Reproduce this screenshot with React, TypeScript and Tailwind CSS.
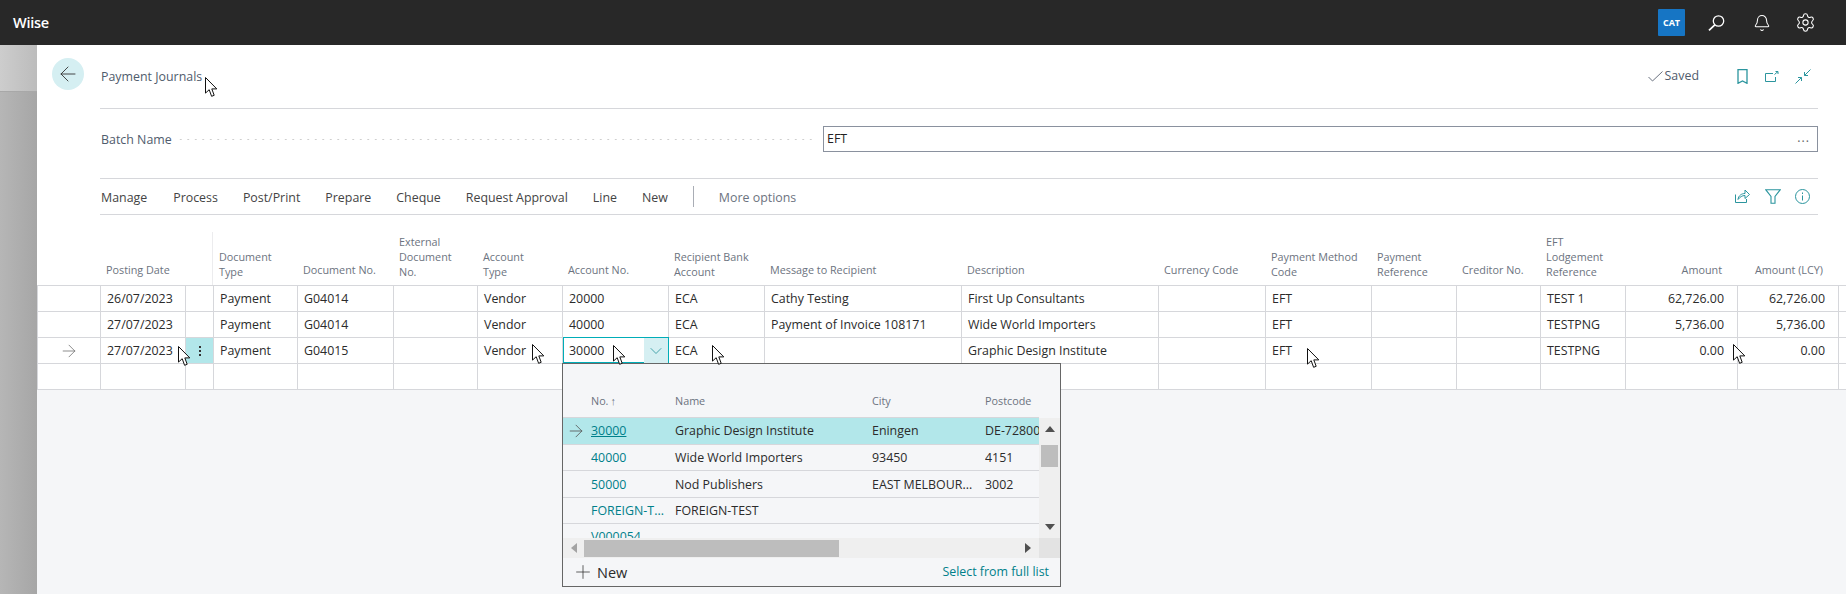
import { ArrowLeft, ArrowRight, ChevronDown, Plus, Settings, Bell } from 'lucide-react'

const gridCols =
  'grid grid-cols-[63px_85px_28px_84px_96px_84px_85px_106px_96px_197px_197px_107px_106px_85px_84px_85px_112px_101px_8px]'
const listCols = 'grid grid-cols-[28px_84px_197px_113px_54px]'
const teal = '#2b959e'

const headers: { lines: string[]; right?: boolean }[] = [
  { lines: [] },
  { lines: ['Posting Date'] },
  { lines: [] },
  { lines: ['Document', 'Type'] },
  { lines: ['Document No.'] },
  { lines: ['External', 'Document', 'No.'] },
  { lines: ['Account', 'Type'] },
  { lines: ['Account No.'] },
  { lines: ['Recipient Bank', 'Account'] },
  { lines: ['Message to Recipient'] },
  { lines: ['Description'] },
  { lines: ['Currency Code'] },
  { lines: ['Payment Method', 'Code'] },
  { lines: ['Payment', 'Reference'] },
  { lines: ['Creditor No.'] },
  { lines: ['EFT', 'Lodgement', 'Reference'] },
  { lines: ['Amount'], right: true },
  { lines: ['Amount (LCY)'], right: true },
  { lines: [] }
]

const rows = [
  ['', '26/07/2023', '', 'Payment', 'G04014', '', 'Vendor', '20000', 'ECA', 'Cathy Testing', 'First Up Consultants', '', 'EFT', '', '', 'TEST 1', '62,726.00', '62,726.00', ''],
  ['', '27/07/2023', '', 'Payment', 'G04014', '', 'Vendor', '40000', 'ECA', 'Payment of Invoice 108171', 'Wide World Importers', '', 'EFT', '', '', 'TESTPNG', '5,736.00', '5,736.00', ''],
  ['', '27/07/2023', '', 'Payment', 'G04015', '', 'Vendor', '30000', 'ECA', '', 'Graphic Design Institute', '', 'EFT', '', '', 'TESTPNG', '0.00', '0.00', ''],
  ['', '', '', '', '', '', '', '', '', '', '', '', '', '', '', '', '', '', '']
]

const vendors = [
  { no: '30000', name: 'Graphic Design Institute', city: 'Eningen', post: 'DE-72800', h: 'h-[27px]', pad: '' },
  { no: '40000', name: 'Wide World Importers', city: '93450', post: '4151', h: 'h-[26px]', pad: 'pt-[2px]' },
  { no: '50000', name: 'Nod Publishers', city: 'EAST MELBOUR...', post: '3002', h: 'h-[27px]', pad: 'pt-[2px]' },
  { no: 'FOREIGN-T...', name: 'FOREIGN-TEST', city: '', post: '', h: 'h-[26px]', pad: 'pt-[2px]' },
  { no: 'V000054', name: '', city: '', post: '', h: 'h-[26px]', pad: 'pt-[2px]' }
]

const cursors = [
  'left-[205px] top-[77px]',
  'left-[178px] top-[346px]',
  'left-[532px] top-[344px]',
  'left-[613px] top-[345px]',
  'left-[712px] top-[345px]',
  'left-[1307px] top-[348px]',
  'left-[1733px] top-[344px]'
]

function MouseCursor({ className }: { className: string }) {
  return (
    <svg className={`absolute ${className}`} width="13" height="20" viewBox="0 0 13 20">
      <path d="M.5.5v15.6l3.7-3.4 2.4 6.6 2.6-1-2.4-6.4h5z" fill="#fff" stroke="#111" strokeWidth="1" />
    </svg>
  )
}

export default function App() {
  return (
    <div
      className="relative flex flex-col w-[1846px] h-[594px] overflow-hidden bg-white text-[12.4px] text-[#2b2b2b]"
      style={{ fontFamily: '"Open Sans", "Noto Sans", sans-serif' }}
    >
      {/* top bar */}
      <div className="flex items-center h-[45px] pl-[13px] pr-[30px] bg-[#282828] text-white">
        <span className="text-[14.5px] font-semibold tracking-[-0.3px]">Wiise</span>
        <div className="ml-auto flex items-center">
          <div className="flex items-center justify-center size-[27px] rounded-[1px] bg-[#1675c4] text-[9px] font-bold">CAT</div>
          <svg className="ml-[23px]" width="17" height="16" viewBox="0 0 17 16" fill="none" stroke="#fff" strokeWidth="1.3">
            <circle cx="10.5" cy="6" r="5.2" />
            <path d="M6.8 9.8 1 15.4" strokeWidth="1.7" />
          </svg>
          <Bell className="ml-[28px] size-[18px]" strokeWidth={1.4} />
          <Settings className="ml-[24px] size-[21px]" strokeWidth={1.2} />
        </div>
      </div>

      <div className="flex flex-1 min-h-0">
        {/* blurred page behind */}
        <div className="flex flex-col w-[37px] bg-gradient-to-r from-[#b6b6b6] to-[#a6a6a6]">
          <div className="h-[47px] border-b border-[#a8a8a8] bg-gradient-to-r from-[#cdcdcd] to-[#bcbcbc]" />
        </div>

        <div className="flex flex-col flex-1 min-w-0">
          <div className="flex">
            <div className="w-[63px] pl-[15px] pt-[13px]">
              <button className="flex items-center justify-center w-[32px] h-[32px] rounded-full bg-[#d5eff2] text-[#333]">
                <ArrowLeft className="size-[24px]" strokeWidth={0.9} />
              </button>
            </div>
            <div className="flex flex-col w-[1718px] text-[#505c6d]">
              <div className="flex items-center h-[64px] pb-[1px] pr-[7px] border-b border-[#d6d7db]">
                <span className="pl-[1px] pt-[3px]">Payment Journals</span>
                <svg className="ml-auto" width="15" height="11" viewBox="0 0 15 11" fill="none" stroke="#6b7280">
                  <path d="M.5 6 4.500 10 14.500.5" />
                </svg>
                <span className="ml-[2px] mr-[38px] pt-[1px]">Saved</span>
                <svg width="11" height="15" viewBox="0 0 11 15" fill="none" stroke={teal} strokeWidth="1.3">
                  <path d="M1 .7h9v13.6l-4.500-2.400L1 14.300z" />
                </svg>
                <svg className="ml-[17px]" width="14" height="11" viewBox="0 0 14 11" fill="none" stroke={teal}>
                  <path d="M8 2.500H.5v8h10V6M9.500 3.500 13 .5M10.500.5H13V3" />
                </svg>
                <svg className="ml-[16px]" width="16" height="15" viewBox="0 0 16 15" fill="none" stroke={teal}>
                  <path d="M.5 14.500 6.500 8.500M3 8.500h3.500V12M15.500.5l-6 6M13 6.500H9.500V3" />
                </svg>
              </div>
              <div className="flex items-start h-[70px] pt-[17px] border-b border-[#d6d7db]">
                <div className="flex items-center w-[723px] h-[26px]">
                  <span className="pl-[1px] pt-[2px]">Batch Name</span>
                  <span className="ml-[5px] mr-[8px] flex-1 h-[3px] mt-[1px] bg-[radial-gradient(circle,#cfcfcf_1px,transparent_1px)] bg-[length:7.5px_3px]" />
                </div>
                <div className="flex items-center flex-1 h-[26px] pl-[3px] pr-[4px] border border-[#8a919e] text-[#222]">
                  <span className="pt-[1px]">EFT</span>
                  <span className="ml-auto pr-[3px] pb-[2px] tracking-[1px] text-[#666]">...</span>
                </div>
              </div>
              <div className="flex items-center h-[36px] pr-[8px] border-b border-[#d6d7db] text-[#444]">
                <div className="flex items-center gap-[25px] pl-[1px] pt-[3px]">
                  <span>Manage</span>
                  <span className="ml-[1px]">Process</span>
                  <span>Post/Print</span>
                  <span>Prepare</span>
                  <span>Cheque</span>
                  <span>Request Approval</span>
                  <span>Line</span>
                  <span>New</span>
                </div>
                <span className="ml-[25px] w-px h-[21px] bg-[#a9adb5]" />
                <span className="ml-[25px] pt-[3px] text-[#6c7380]">More options</span>
                <svg className="ml-auto -mt-[1px]" width="15" height="14" viewBox="0 0 15 14" fill="none" stroke={teal}>
                  <path d="M.5 5.500v8h11V10M3 10.500C3.500 6.500 6.500 4.500 10 4.500V1l4.500 4.500L10 9.500v-3c-3 0-5 1.500-7 4z" />
                </svg>
                <svg className="ml-[15px] -mt-[1px]" width="16" height="15" viewBox="0 0 16 15" fill="none" stroke={teal} strokeWidth="1.1">
                  <path d="M.7.7h14.600L10 7.500v6.800H6V7.500z" />
                </svg>
                <svg className="ml-[14px] -mt-[1px]" width="15" height="15" viewBox="0 0 15 15" fill="none" stroke={teal}>
                  <circle cx="7.500" cy="7.500" r="7" />
                  <path d="M7.500 6.500v5M7.500 3.500v1.500" />
                </svg>
              </div>
            </div>
          </div>

          {/* journal lines */}
          <div className="mt-[17px]">
            <div className={`${gridCols} h-[53px] text-[10.8px] leading-[15px] text-[#6c7380]`}>
              {headers.map((h, i) => (
                <div
                  key={i}
                  className={`flex flex-col justify-end px-[6px] ${h.lines.length > 1 ? 'pb-[6px]' : 'pb-[8px]'} ${h.right ? 'items-end pr-[15px]' : ''} ${i === 2 ? 'border-r border-[#ececee]' : ''}`}
                >
                  {h.lines.map((l) => (
                    <span key={l} className="whitespace-nowrap">{l}</span>
                  ))}
                </div>
              ))}
            </div>
            {rows.map((row, r) => (
              <div
                key={r}
                className={`${gridCols} border-t border-l border-[#d6d7db] ${r === 3 ? 'h-[27px] border-b' : 'h-[26px]'}`}
              >
                {row.map((cell, c) => {
                  if (r === 2 && c === 0) {
                    return (
                      <div key={c} className="flex items-center justify-end pr-[21px] border-r border-[#d6d7db] text-[#666]">
                        <ArrowRight className="size-[20px]" strokeWidth={0.9} />
                      </div>
                    )
                  }
                  if (r === 2 && c === 2) {
                    return (
                      <div key={c} className="flex flex-col items-center justify-center gap-[2px] bg-[#b2e7ea] border-r border-[#d6d7db]">
                        <span className="size-[2px] bg-[#333]" />
                        <span className="size-[2px] bg-[#333]" />
                        <span className="size-[2px] bg-[#333]" />
                      </div>
                    )
                  }
                  if (r === 2 && c === 7) {
                    return (
                      <div key={c} className="flex border-x border-t border-[#00adb8] -mt-px">
                        <div className="flex flex-1 items-center pl-[5px] pt-[2px] border-b-[1.5px] border-[#00adb8]">{cell}</div>
                        <div className="flex items-center justify-center w-[24px] bg-[#d5eff2] text-[#2b959e]">
                          <ChevronDown className="size-[20px]" strokeWidth={1} />
                        </div>
                      </div>
                    )
                  }
                  return (
                    <div
                      key={c}
                      className={`flex items-center px-[6px] pt-[2px] whitespace-nowrap ${c === 18 ? '' : 'border-r border-[#d6d7db]'} ${c === 16 || c === 17 ? 'justify-end pr-[13px]' : ''}`}
                    >
                      {cell}
                    </div>
                  )
                })}
              </div>
            ))}
          </div>
          <div className="flex-1 bg-[#f5f6f8]" />
        </div>
      </div>

      {/* account lookup */}
      <div className="absolute left-[562px] top-[363px] flex flex-col w-[499px] h-[224px] border border-[#666] bg-[#f5f6f8]">
        <div className="flex h-[174px]">
          <div className="w-[476px] overflow-hidden">
            <div className={`${listCols} h-[54px] items-end pb-[8px] text-[10.8px] text-[#6c7380] border-b border-[#d6d7db]`}>
              <span />
              <span className="flex items-center gap-[2px]">No. <span className="text-[11px] font-bold leading-none">↑</span></span>
              <span>Name</span>
              <span>City</span>
              <span>Postcode</span>
            </div>
            {vendors.map((v, i) => (
              <div
                key={v.no}
                className={`${listCols} ${v.h} ${v.pad} items-center border-b border-[#d6d7db] whitespace-nowrap ${i === 0 ? 'bg-[#b2e7ea]' : ''}`}
              >
                <span className="flex justify-end pr-[5px] text-[#555]">
                  {i === 0 && <ArrowRight className="size-[20px]" strokeWidth={1} />}
                </span>
                <span className={`text-[#00808a] ${i === 0 ? 'underline' : ''}`}>{v.no}</span>
                <span>{v.name}</span>
                <span>{v.city}</span>
                <span className="overflow-hidden">{v.post}</span>
              </div>
            ))}
          </div>
          <div className="flex flex-col items-center flex-1 mt-[54px] pt-[8px] bg-[#efefef]">
            <svg width="10" height="6" viewBox="0 0 10 6"><path d="M5 0l5 6H0z" fill="#505050" /></svg>
            <div className="w-[17px] h-[22px] mt-[13px] bg-[#bdbdbd]" />
            <svg className="mt-auto mb-[8px]" width="10" height="6" viewBox="0 0 10 6"><path d="M5 6 0 0h10z" fill="#505050" /></svg>
          </div>
        </div>
        <div className="flex h-[20px]">
          <div className="flex items-center w-[476px] pl-[8px] bg-[#efefef]">
            <svg width="6" height="10" viewBox="0 0 6 10"><path d="M0 5l6-5v10z" fill="#a3a3a3" /></svg>
            <div className="ml-[7px] w-[255px] h-[17px] bg-[#bdbdbd]" />
            <svg className="ml-auto mr-[8px]" width="6" height="10" viewBox="0 0 6 10"><path d="M6 5 0 0v10z" fill="#505050" /></svg>
          </div>
          <div className="flex-1 bg-[#e3e3e3]" />
        </div>
        <div className="flex flex-1 items-center pl-[9px] pr-[11px]">
          <Plus className="size-[22px]" strokeWidth={0.8} />
          <span className="ml-[3px] pt-[1px] text-[14.5px]">New</span>
          <span className="ml-auto pt-[1px] text-[#00808a]">Select from full list</span>
        </div>
      </div>

      {cursors.map((c) => (
        <MouseCursor key={c} className={c} />
      ))}
    </div>
  )
}
